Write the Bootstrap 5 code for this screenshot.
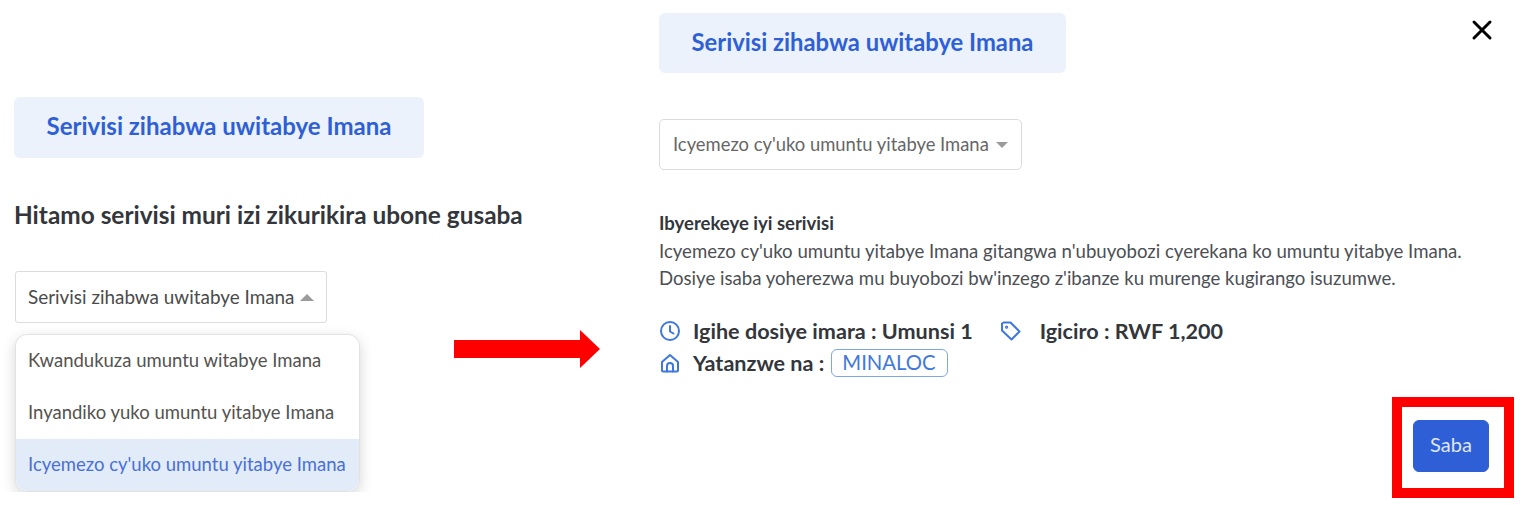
<!DOCTYPE html>
<html lang="rw">
<head>
<meta charset="utf-8">
<title>Serivisi zihabwa uwitabye Imana</title>
<link href="https://cdn.jsdelivr.net/npm/bootstrap@5.3.0/dist/css/bootstrap.min.css" rel="stylesheet">
<style>
html,body{height:505px;overflow:hidden;background:#fff}
body{font-family:"Lato","Noto Sans",sans-serif;color:#3a3d42;position:relative}
.stage{height:505px}
.pane-left{width:645px;padding:97px 0 0 14px;flex:none}
.pane-right{flex:1;padding:13px 0 0 14px;position:relative}
.title-tag{height:61px;background:#ebf2fb;color:#2f5fd6;border-radius:6px;font-size:24px;font-weight:700;display:flex;align-items:center;justify-content:center;padding-bottom:4px}
.pane-left .title-tag{width:410px}
.pane-right .title-tag{width:407px;height:60px;font-size:23.8px;padding-bottom:1px}
.pick-head{font-size:24.4px;font-weight:700;color:#33363b;line-height:30px;margin:42px 0 0;white-space:nowrap}
.pick{display:flex;align-items:center;justify-content:space-between;background:#fff;border:1px solid #dcdcdc;color:#4b4b4b}
.pick-up{width:312px;height:52px;margin:41px 0 0 1px;padding:0 12px;border-radius:3px;font-size:18.9px}
.pick-down{width:363px;height:51px;margin-top:46px;padding:0 13px;border-radius:5px;color:#666;font-size:18.4px}
.caret{width:0;height:0}
.caret-up{border-left:7px solid transparent;border-right:7px solid transparent;border-bottom:7px solid #9b9b9b}
.caret-down{border-left:6px solid transparent;border-right:6px solid transparent;border-top:6px solid #9b9b9b}
.choices{width:345px;margin:11px 0 0 1px;border-radius:12px;border:1px solid #e2e2e2;box-shadow:0 4px 14px rgba(0,0,0,.16);overflow:hidden;background:#fff;clip-path:inset(-20px -20px 0 -20px round 0)}
.choices .list-group-item{border:0;height:52px;padding:0 12px;display:flex;align-items:center;font-size:18.5px;color:#55534f;white-space:nowrap;margin:0}
.choices .list-group-item.active{background:#e1ecf8;color:#4a6fd8;margin-top:0}
.about{margin:40px 0 0;font-size:18.6px;line-height:27.5px;color:#4c4f54;white-space:nowrap}
.about strong{color:#33363b;font-size:18.5px}
.facts{margin-top:22.5px;font-size:21.6px;font-weight:700;color:#33363b;line-height:32px;white-space:nowrap}
.fact-ico{width:22px;height:22px;flex:none;color:#3f78dc}
.gap-clock{margin-right:12px}
.gap-tag{margin-left:27px;margin-right:18px}
.org-tag{font-weight:400;color:#3f78dc;border:1px solid #7ea6ea;border-radius:6px;padding:0 11px 1px 10px;line-height:25px;font-size:20.3px;display:inline-block;margin-left:7px}
.send-btn{width:76px;height:52px;background:#2f5fd6;border-color:#2f5fd6;border-radius:6px;font-size:20px;color:#dfe8fb;padding:0 0 5px}
.send-row{position:absolute;left:768px;top:420px}
.close-x{position:absolute;left:826px;top:19px;width:22px;height:22px;color:#000}
.note-arrow{position:absolute;left:454px;top:330px;width:146px;height:38px}
.note-box{position:absolute;left:1392px;top:397px;width:122px;height:101px;border:10px solid #f00}
</style>
</head>
<body>
<div class="stage d-flex">
  <section class="pane-left">
    <div class="title-tag">Serivisi zihabwa uwitabye Imana</div>
    <h2 class="pick-head">Hitamo serivisi muri izi zikurikira ubone gusaba</h2>
    <div class="pick pick-up"><span>Serivisi zihabwa uwitabye Imana</span><span class="caret caret-up"></span></div>
    <div class="choices list-group">
      <div class="list-group-item">Kwandukuza umuntu witabye Imana</div>
      <div class="list-group-item">Inyandiko yuko umuntu yitabye Imana</div>
      <div class="list-group-item active">Icyemezo cy'uko umuntu yitabye Imana</div>
    </div>
  </section>
  <section class="pane-right">
    <div class="title-tag">Serivisi zihabwa uwitabye Imana</div>
    <div class="pick pick-down"><span>Icyemezo cy'uko umuntu yitabye Imana</span><span class="caret caret-down"></span></div>
    <div class="about">
      <strong>Ibyerekeye iyi serivisi</strong><br>
      Icyemezo cy'uko umuntu yitabye Imana gitangwa n'ubuyobozi cyerekana ko umuntu yitabye Imana.<br>
      Dosiye isaba yoherezwa mu buyobozi bw'inzego z'ibanze ku murenge kugirango isuzumwe.
    </div>
    <div class="facts">
      <div class="d-flex align-items-center">
        <svg class="fact-ico gap-clock" viewBox="0 0 22 22" fill="none" stroke="currentColor" stroke-width="2" stroke-linecap="round" stroke-linejoin="round"><circle cx="11" cy="11" r="9"/><path d="M11 6v5.500l3.500 2"/></svg>
        <span>Igihe dosiye imara : Umunsi 1</span>
        <svg class="fact-ico gap-tag" viewBox="0 0 22 22" fill="none" stroke="currentColor" stroke-width="2" stroke-linecap="round" stroke-linejoin="round"><path d="M2 3.500v7l9.500 9 8-8-9-9H3.500z"/><circle cx="6.600" cy="7.200" r=".6"/></svg>
        <span>Igiciro : RWF 1,200</span>
      </div>
      <div class="d-flex align-items-center">
        <svg class="fact-ico gap-clock" viewBox="0 0 22 22" fill="none" stroke="currentColor" stroke-width="2" stroke-linecap="round" stroke-linejoin="round"><path d="M3 10l8-7 8 7v8.500a1 1 0 0 1-1 1H4a1 1 0 0 1-1-1z"/><path d="M8 19.500V14a3 3 0 0 1 6 0v5.500"/></svg>
        <span>Yatanzwe na :</span>
        <span class="org-tag">MINALOC</span>
      </div>
    </div>
    <button type="button" class="btn btn-primary send-btn send-row">Saba</button>
    <svg class="close-x" viewBox="0 0 22 22" fill="none" stroke="currentColor" stroke-width="3" stroke-linecap="round"><path d="M3 3l16 16M19 3L3 19"/></svg>
  </section>
</div>
<svg class="note-arrow" viewBox="0 0 146 38"><path fill="#f00" d="M0 10h126V0l20 19-20 19V28H0z"/></svg>
<div class="note-box"></div>
</body>
</html>
